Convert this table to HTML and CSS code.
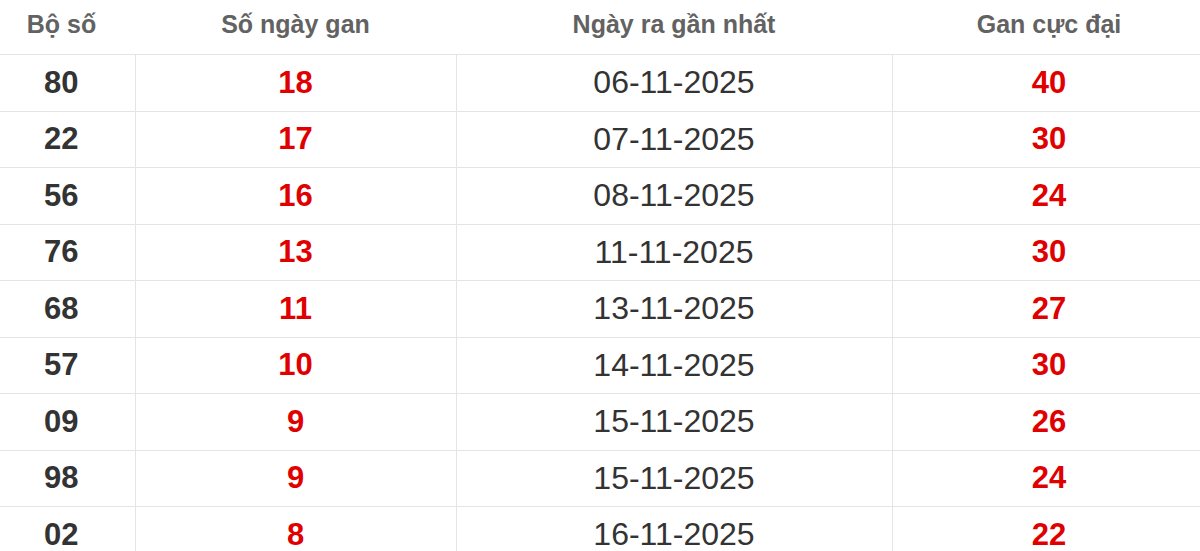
FILE: index.html
```html
<!DOCTYPE html>
<html lang="vi">
<head>
<meta charset="utf-8">
<title>Lô gan</title>
<link rel="stylesheet" href="styles.css">
</head>
<body>
<table class="gan-table">
  <colgroup>
    <col class="c1"><col class="c2"><col class="c3"><col class="c4">
  </colgroup>
  <thead>
    <tr><th>Bộ số</th><th>Số ngày gan</th><th>Ngày ra gần nhất</th><th>Gan cực đại</th></tr>
  </thead>
  <tbody>
    <tr><td class="num">80</td><td class="red">18</td><td class="date">06-11-2025</td><td class="red">40</td></tr>
    <tr><td class="num">22</td><td class="red">17</td><td class="date">07-11-2025</td><td class="red">30</td></tr>
    <tr><td class="num">56</td><td class="red">16</td><td class="date">08-11-2025</td><td class="red">24</td></tr>
    <tr><td class="num">76</td><td class="red">13</td><td class="date">11-11-2025</td><td class="red">30</td></tr>
    <tr><td class="num">68</td><td class="red">11</td><td class="date">13-11-2025</td><td class="red">27</td></tr>
    <tr><td class="num">57</td><td class="red">10</td><td class="date">14-11-2025</td><td class="red">30</td></tr>
    <tr><td class="num">09</td><td class="red">9</td><td class="date">15-11-2025</td><td class="red">26</td></tr>
    <tr><td class="num">98</td><td class="red">9</td><td class="date">15-11-2025</td><td class="red">24</td></tr>
    <tr><td class="num">02</td><td class="red">8</td><td class="date">16-11-2025</td><td class="red">22</td></tr>
  </tbody>
</table>
</body>
</html>
```
FILE: styles.css
```css
html, body {
  margin: 0;
  padding: 0;
  background: #fff;
  overflow: hidden;
}
body {
  font-family: "Liberation Sans", Arial, sans-serif;
}
.gan-table {
  border-collapse: collapse;
  table-layout: fixed;
  width: 1218px;
  margin-left: -12px;
}
.c1 { width: 147px; }
.c2 { width: 321px; }
.c3 { width: 436px; }
.c4 { width: 314px; }
.gan-table th {
  height: 48px;
  padding: 0 0 6px;
  font-size: 25px;
  font-weight: 700;
  color: #626262;
  text-align: center;
  vertical-align: middle;
  border-bottom: 1px solid #e4e4e4;
}
.gan-table td {
  height: 55.5px;
  padding: 0;
  text-align: center;
  vertical-align: middle;
  font-size: 31px;
  border: 1px solid #e4e4e4;
}
.gan-table td:first-child { border-left: none; }
.num { font-weight: 700; color: #333; }
.red { font-weight: 700; color: #e00000; }
.gan-table td.date { font-weight: 400; color: #333; font-size: 32px; }
```
